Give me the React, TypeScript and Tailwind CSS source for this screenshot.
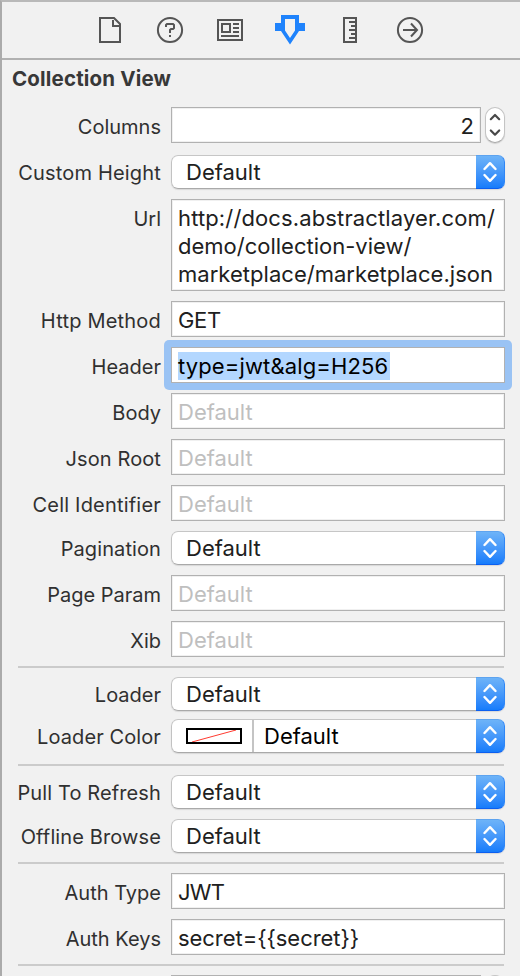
import type { ReactNode } from "react";

function Chevrons() {
  return (
    <span className="flex h-full w-[29px] shrink-0 items-center justify-center rounded-r-[7px] border-t border-r border-b border-t-[#5da3ef] border-r-[#2f86f6] border-b-[#0c5ff0] bg-linear-to-b from-[#6db3f8] to-[#157cfb]">
      <svg width="14" height="22" viewBox="0 0 14 22" fill="none" stroke="#fff" strokeWidth="2.4" strokeLinecap="round" strokeLinejoin="round">
        <path d="M1.500 8 7 2.200l5.500 5.800M1.500 14 7 19.800l5.500-5.800" />
      </svg>
    </span>
  );
}

function Row({ label, className, labelClass, children }: { label: string; className: string; labelClass: string; children: ReactNode }) {
  return (
    <div className={`flex items-start ${className}`}>
      <div className={`mr-[10px] w-[159px] shrink-0 text-right text-[20px] whitespace-nowrap text-[#303030] ${labelClass}`}>{label}</div>
      {children}
    </div>
  );
}

function Select({ children }: { children?: ReactNode }) {
  return (
    <div className="flex h-[34px] w-[334px] rounded-[7px] bg-white shadow-[0_1px_1px_#d8d8d8]">
      <div className="flex flex-1 items-center rounded-l-[7px] border-t border-b border-l border-t-[#c6c6c6] border-b-[#a9a9a9] border-l-[#c2c2c2] text-[22px] text-[#202020]">
        {children ?? <span className="pl-[14px]">Default</span>}
      </div>
      <Chevrons />
    </div>
  );
}

function Field({ value, className = "" }: { value?: string; className?: string }) {
  return (
    <div className={`flex h-9 w-[334px] items-center border border-[#b1b1b1] bg-white pt-[2px] pl-[6px] text-[22px] leading-7 shadow-[inset_0_0_0_1px_#f0f0f0] ${value ? "text-[#202020]" : "text-[#bfbfbf]"} ${className}`}>
      {value ?? "Default"}
    </div>
  );
}

function Stepper() {
  return (
    <div className="ml-1 flex h-9 w-5 items-center justify-center rounded-full border border-[#c4c4c4] border-b-[#a9a9a9] bg-white shadow-[0_1px_1px_#d0d0d0]">
      <svg width="12" height="24" viewBox="0 0 12 24" fill="none" stroke="#484848" strokeWidth="2.200" strokeLinecap="round" strokeLinejoin="round">
        <path d="m1.800 6.200 4.200-4.200 4.200 4.200M1.800 17.500 6 21.700l4.200-4.200" />
      </svg>
    </div>
  );
}

function Separator({ className }: { className: string }) {
  return <div className={`ml-4 h-[2px] w-[486px] bg-[#cbcbcb] ${className}`} />;
}

function Toolbar() {
  return (
    <div className="flex h-[58px] items-center border-b-2 border-[#b1b1b1] pl-[93px]">
      <svg width="30" height="30" viewBox="0 0 30 30" fill="none" stroke="#555" strokeWidth="2">
        <path d="M5 3h14l6 6v18H5zM18 5v6h6" />
      </svg>
      <svg className="ml-[30px]" width="30" height="30" viewBox="0 0 30 30" fill="none" stroke="#555" strokeWidth="2">
        <circle cx="15" cy="15" r="12.100" />
        <path d="M11 12v-2l1-1h6l1 1v3l-1 1h-2l-1 1v3M14 21h2" />
      </svg>
      <svg className="ml-[30px]" width="30" height="30" viewBox="0 0 30 30" fill="none" stroke="#555" strokeWidth="2">
        <path d="M3 5h24v20H3zM7 9h8v8H7zM18 9h6M18 13h6M18 17h6M6 21h18" />
      </svg>
      <svg className="ml-[30px]" width="30" height="30" viewBox="0 0 30 30">
        <path fill="#1f83fc" fillRule="evenodd" d="M6 0h18v8h6v8h-6l-9 13.500L6 16H0V8h6zM10 4v11.500l5 7.500 5-7.500V4z" />
      </svg>
      <svg className="ml-[30px]" width="30" height="30" viewBox="0 0 30 30" fill="none" stroke="#555" strokeWidth="2">
        <path d="M9 3h12v24H9zM14 7h6M16 11h4M14 15h6M16 19h4M14 23h6" />
      </svg>
      <svg className="ml-[30px]" width="30" height="30" viewBox="0 0 30 30" fill="none" stroke="#555" strokeWidth="2">
        <circle cx="15" cy="15" r="12.100" />
        <path d="M8 15h13.500M16 8.500l6 6.500-6 6.500" />
      </svg>
    </div>
  );
}

const BOX = "h-9 pt-[4px] leading-8";
const POP = "h-[34px] pt-[2px] leading-8";

export default function App() {
  return (
    <div className="h-[976px] w-[520px] overflow-hidden border-t-2 border-l-2 border-t-[#b9b9b9] border-l-[#ababab] bg-[#f1f1f1] font-['Inter','Liberation_Sans',sans-serif]">
      <Toolbar />
      <h1 className="mt-[5px] ml-[10px] h-7 text-[20.5px] leading-7 font-bold tracking-[0.17px] whitespace-nowrap text-[#383838]">Collection View</h1>
      <Row label="Columns" className="mt-[14px]" labelClass={BOX}>
        <div className="flex h-9 w-[310px] items-center justify-end border border-[#b1b1b1] bg-white pt-[2px] pr-[6px] text-[22px] text-[#202020] shadow-[inset_0_0_0_1px_#f0f0f0]">2</div>
        <Stepper />
      </Row>
      <Row label="Custom Height" className="mt-3" labelClass={`${POP} tracking-[0.18px]`}><Select /></Row>
      <Row label="Url" className="mt-[10px]" labelClass={BOX}>
        <div className="h-[92px] w-[334px] border border-[#b1b1b1] bg-white pt-[4px] pl-[6px] text-[22px] leading-7 whitespace-nowrap text-[#202020] shadow-[inset_0_0_0_1px_#f0f0f0]">
          <div className="tracking-[0.13px]">http://docs.abstractlayer.com/</div>
          <div>demo/collection-view/</div>
          <div className="tracking-[0.03px]">marketplace/marketplace.json</div>
        </div>
      </Row>
      <Row label="Http Method" className="mt-[10px]" labelClass={`${BOX} tracking-[0.2px]`}><Field value="GET" className="tracking-[-0.3px]" /></Row>
      <Row label="Header" className="mt-[10px]" labelClass={BOX}>
        <div className="-m-[7px] rounded-[5px] bg-[#9ac3f4] p-[7px]">
          <div className="flex h-9 w-[334px] items-center border border-[#b1b1b1] bg-white pt-[2px] pl-[6px] text-[22px] tracking-[0.13px] text-black">
            <span className="h-7 w-[212px] bg-[#b3d7ff] leading-7 whitespace-nowrap">type=jwt&amp;alg=H256</span>
          </div>
        </div>
      </Row>
      <Row label="Body" className="mt-[10px]" labelClass={BOX}><Field /></Row>
      <Row label="Json Root" className="mt-[10px]" labelClass={`${BOX} tracking-[0.1px]`}><Field /></Row>
      <Row label="Cell Identifier" className="mt-[10px]" labelClass={`${BOX} tracking-[0.2px]`}><Field /></Row>
      <Row label="Pagination" className="mt-[10px]" labelClass={`${POP} tracking-[0.1px]`}><Select /></Row>
      <Row label="Page Param" className="mt-[10px]" labelClass={BOX}><Field /></Row>
      <Row label="Xib" className="mt-[10px]" labelClass={BOX}><Field /></Row>
      <Separator className="mt-[9px]" />
      <Row label="Loader" className="mt-[9px]" labelClass={POP}><Select /></Row>
      <Row label="Loader Color" className="mt-2" labelClass={`${POP} tracking-[0.1px]`}>
        <Select>
          <svg className="ml-[14px]" width="56" height="16" viewBox="0 0 56 16">
            <path fill="#fff" stroke="#ff3b30" strokeWidth="1" d="M6 14 50 2" />
            <path fill="none" stroke="#000" strokeWidth="2" d="M1 1h54v14H1z" />
          </svg>
          <span className="ml-[10px] h-full w-[2px] bg-[#c4c4c4]" />
          <span className="pl-[10px] text-black">Default</span>
        </Select>
      </Row>
      <Separator className="mt-[11px]" />
      <Row label="Pull To Refresh" className="mt-[9px]" labelClass={`${POP} tracking-[0.12px]`}><Select /></Row>
      <Row label="Offline Browse" className="mt-[10px]" labelClass={`${POP} tracking-[0.12px]`}><Select /></Row>
      <Separator className="mt-[9px]" />
      <Row label="Auth Type" className="mt-[9px]" labelClass={BOX}><Field value="JWT" className="tracking-[-0.7px]" /></Row>
      <Row label="Auth Keys" className="mt-[10px]" labelClass={BOX}><Field value="secret={{secret}}" className="tracking-[-0.05px]" /></Row>
      <Separator className="mt-[9px]" />
      <div className="mt-[9px] ml-[169px] flex">
        <div className="h-9 w-[310px] border border-[#b1b1b1] bg-white" />
        <Stepper />
      </div>
    </div>
  );
}
